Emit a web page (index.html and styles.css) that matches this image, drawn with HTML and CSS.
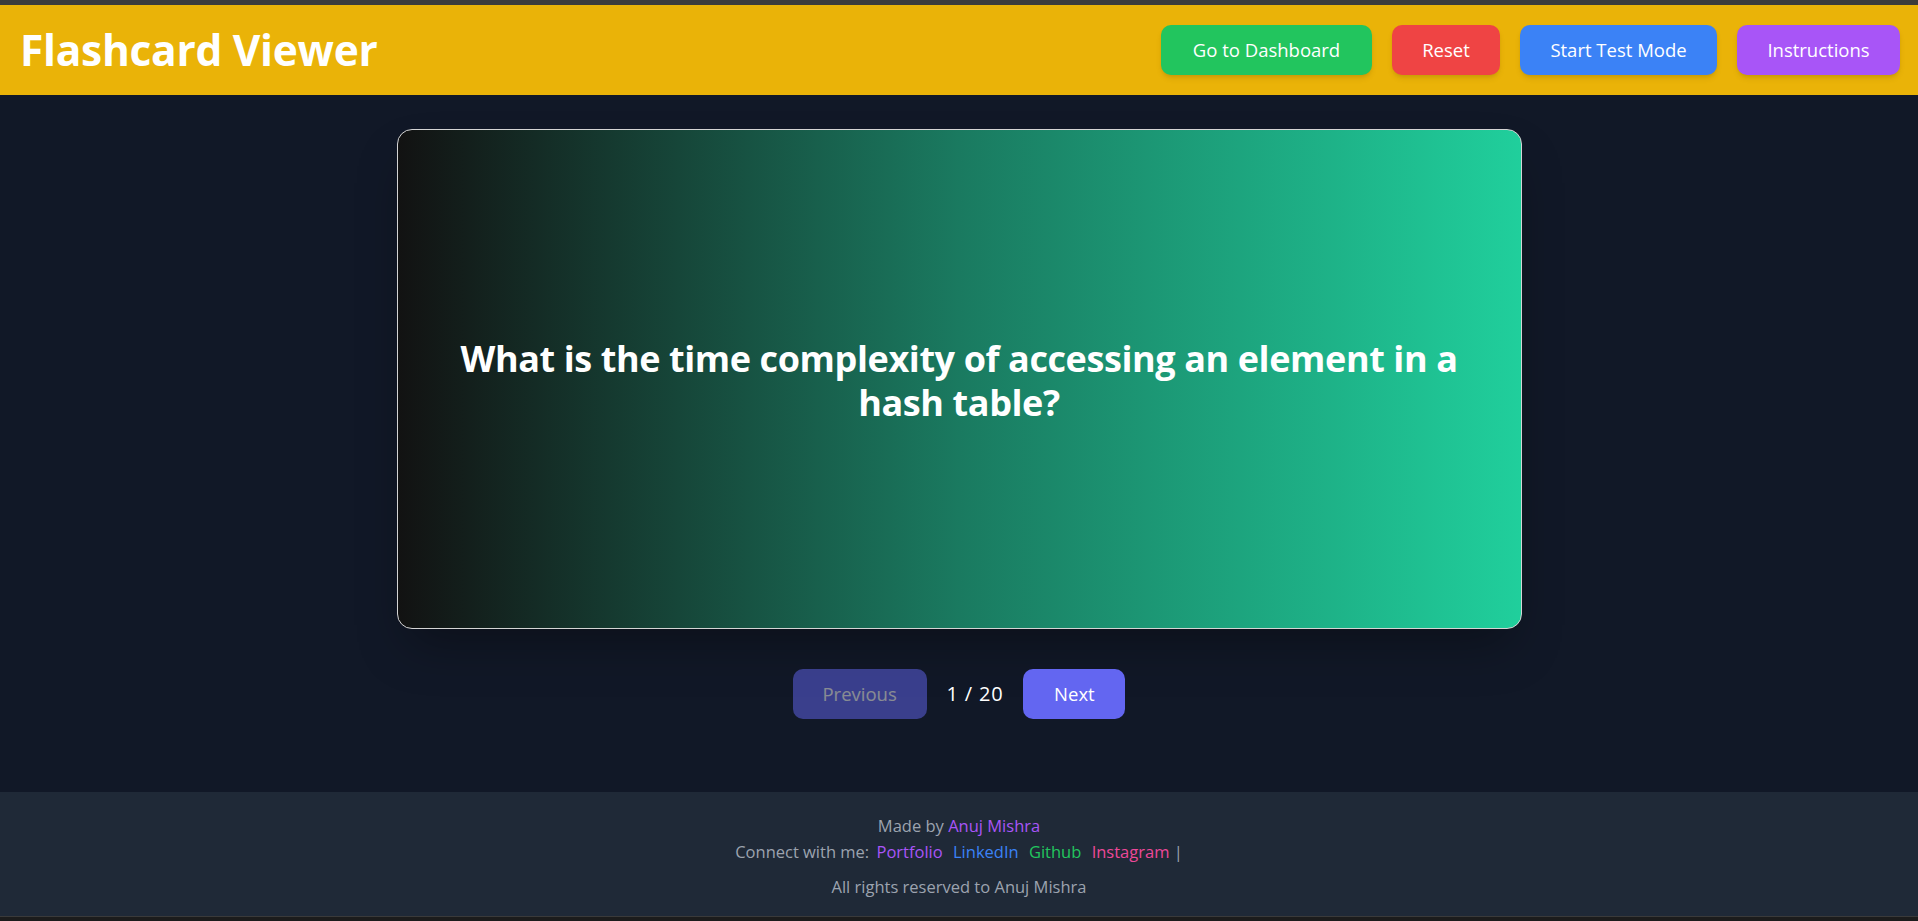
FILE: index.html
```html
<!DOCTYPE html>
<html lang="en">
<head>
<meta charset="UTF-8">
<title>Flashcard Viewer</title>
<link rel="stylesheet" href="styles.css">
</head>
<body>
<div class="frame-top"></div>
<div class="app">
  <header class="header">
    <h1 class="title">Flashcard Viewer</h1>
    <nav class="actions">
      <button class="btn btn-green">Go to Dashboard</button>
      <button class="btn btn-red">Reset</button>
      <button class="btn btn-blue">Start Test Mode</button>
      <button class="btn btn-purple">Instructions</button>
    </nav>
  </header>
  <main class="main">
    <div class="card">
      <h2 class="question">What is the time complexity of accessing an element in a hash table?</h2>
    </div>
    <div class="pager">
      <button class="btn btn-indigo btn-disabled">Previous</button>
      <span class="count">1 / 20</span>
      <button class="btn btn-indigo">Next</button>
    </div>
  </main>
  <footer class="footer">
    <p class="line">Made by <a class="link link-purple plain">Anuj Mishra</a></p>
    <p class="line">Connect with me: <a class="link link-purple">Portfolio</a> <a class="link link-blue">LinkedIn</a> <a class="link link-green">Github</a> <a class="link link-pink last">Instagram</a> |</p>
    <p class="line rights">All rights reserved to Anuj Mishra</p>
  </footer>
</div>
<div class="frame-bottom"></div>
</body>
</html>
```
FILE: styles.css
```css
* { box-sizing: border-box; }
html, body { margin: 0; padding: 0; }
body {
  height: 921px;
  display: flex;
  flex-direction: column;
  background: #111827;
  font-family: "Open Sans", "Noto Sans", sans-serif;
  color: #ffffff;
}
.frame-top { height: 5px; background: #3c3c3c; flex: none; }
.frame-bottom { height: 5px; background: #1c1c1c; border-top: 1px solid #3a3a3a; flex: none; }
.app { flex: 1; display: flex; flex-direction: column; min-height: 0; }
.header {
  height: 90px;
  flex: none;
  background: #eab308;
  display: flex;
  align-items: center;
  justify-content: space-between;
  padding: 0 18px 0 20px;
}
.title {
  margin: 0;
  font-size: 42.5px;
  font-weight: 700;
  line-height: 50px;
  letter-spacing: -0.3px;
  color: #ffffff;
}
.actions { display: flex; gap: 20px; }
.btn {
  border: none;
  font-family: inherit;
  font-size: 18.5px;
  line-height: 30px;
  padding: 10px 0;
  border-radius: 10px;
  color: #ffffff;
  cursor: pointer;
  text-align: center;
}
.actions .btn { box-shadow: 0 4px 6px -1px rgba(0,0,0,0.1), 0 2px 4px -2px rgba(0,0,0,0.1); }
.btn-green { background: #22c55e; width: 211px; }
.btn-red { background: #ef4444; width: 108px; }
.btn-blue { background: #3b82f6; width: 197px; }
.btn-purple { background: #a855f7; width: 163px; }
.main {
  flex: 1;
  display: flex;
  flex-direction: column;
  align-items: center;
  padding-top: 34px;
}
.card {
  width: 1125px;
  height: 500px;
  border: 1px solid #d4d4d4;
  border-radius: 15px;
  background: linear-gradient(to right, #121212 0%, #1a7a60 50%, #20cf9c 100%);
  box-shadow: 0 25px 50px -12px rgba(0,0,0,0.35);
  display: flex;
  align-items: center;
  justify-content: center;
  padding: 4px 40px 0;
}
.question {
  margin: 0;
  text-align: center;
  font-size: 36px;
  line-height: 44px;
  font-weight: 700;
  letter-spacing: -0.4px;
  color: #ffffff;
  max-width: 1040px;
}
.pager {
  margin-top: 40px;
  display: flex;
  align-items: center;
  gap: 20px;
}
.btn-indigo { background: #6366f1; }
.pager .btn-indigo { width: 102px; }
.pager .btn-disabled { width: 134px; opacity: 0.5; cursor: default; }
.count { font-size: 20px; line-height: 30px; letter-spacing: 0.8px; }
.footer {
  height: 124px;
  flex: none;
  background: #1f2937;
  text-align: center;
  padding-top: 21px;
  color: #9ca3af;
  font-size: 16.5px;
}
.line { margin: 0; line-height: 26px; }
.rights { margin-top: 9px; }
.link { margin: 0 3px; text-decoration: none; }
.link.plain { margin: 0; }
.link.last { margin-right: 0; }
.link-purple { color: #a855f7; }
.link-blue { color: #3b82f6; }
.link-green { color: #22c55e; }
.link-pink { color: #ec4899; }
```
